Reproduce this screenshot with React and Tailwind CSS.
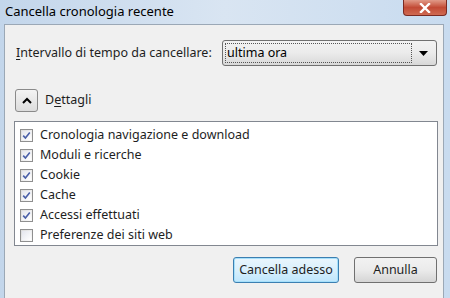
import React from "react";

const Check = ({ checked }) => (
  <div className="w-[13px] h-[13px] border border-[#8f8f8f] bg-gradient-to-br from-[#dcdcdc] to-[#fbfbfb] flex items-center justify-center">
    <div className="w-[9px] h-[9px] bg-gradient-to-br from-[#e4e6ee] to-[#ffffff] flex items-center justify-center">
      {checked && (
        <svg width="9" height="9" viewBox="0 0 9 9">
          <path d="M1.2 4.6 L3.4 7 L7.8 1.5" fill="none" stroke="#4a5fa8" strokeWidth="1.6" />
        </svg>
      )}
    </div>
  </div>
);

const items = [
  ["Cronologia navigazione e download", true],
  ["Moduli e ricerche", true],
  ["Cookie", true],
  ["Cache", true],
  ["Accessi effettuati", true],
  ["Preferenze dei siti web", false],
];

export default function App() {
  return (
    <div
      className="relative w-[450px] h-[298px] overflow-hidden bg-gradient-to-r from-[#c3d6eb] via-[#d9e5f2] to-[#c8dbef] text-[#1e1e1e]"
      style={{ fontFamily: '"Noto Sans", "Open Sans", sans-serif' }}
    >
      <div className="h-[24px] flex items-center pl-[5px] text-[13px] text-black">
        Cancella cronologia recente
      </div>
      <div className="absolute top-0 right-[3px] w-[44px] h-[16px] rounded-b-[4px] border border-t-0 border-[#7a2a22] bg-gradient-to-b from-[#e09a88] via-[#c24a35] to-[#cf6a52] flex items-center justify-center">
        <svg width="12" height="10" viewBox="0 0 12 10">
          <path d="M2 1 L10 9 M10 1 L2 9" stroke="white" strokeWidth="2.4" strokeLinecap="square" />
        </svg>
      </div>
      <div className="ml-[4px] mr-[6px] h-[274px] bg-[#f0f0f0] border-l border-t border-r border-[#9ba8b6] text-[12.5px] leading-none">
        <div className="flex items-center mt-[15px] pl-[11px]">
          <span className="w-[206px]">
            <span className="underline underline-offset-2">I</span>ntervallo di tempo da cancellare:
          </span>
          <div className="w-[215px] h-[26px] rounded-[3px] border border-[#707070] bg-gradient-to-b from-[#f2f2f2] via-[#ebebeb] to-[#d8d8d8] flex items-center px-[2px]">
            <div className="flex-1 h-[20px] border border-dotted border-[#555] flex items-center pl-[1px] text-black">
              ultima ora
            </div>
            <div className="w-[22px] flex justify-center">
              <svg width="9" height="5" viewBox="0 0 9 5">
                <path d="M0 0 H9 L4.5 5 Z" fill="#000" />
              </svg>
            </div>
          </div>
        </div>
        <div className="flex items-center mt-[23px] pl-[10px]">
          <div className="w-[23px] h-[23px] rounded-[3px] border border-[#8a8a8a] bg-gradient-to-b from-[#f4f4f4] to-[#dcdcdc] flex items-center justify-center">
            <svg width="10" height="7" viewBox="0 0 10 7">
              <path d="M1 6 L5 2 L9 6" fill="none" stroke="#000" strokeWidth="2" />
            </svg>
          </div>
          <span className="ml-[7px]">
            D<span className="underline underline-offset-2">e</span>ttagli
          </span>
        </div>
        <div className="ml-[9px] mt-[9px] w-[424px] h-[125px] bg-white border border-[#828790] pt-[3px]">
          {items.map(([label, checked]) => (
            <div key={label} className="h-[20px] flex items-center pl-[5px]">
              <Check checked={checked} />
              <span className="ml-[7px]">{label}</span>
            </div>
          ))}
        </div>
        <div className="flex justify-end gap-[15px] mt-[11px] pr-[6px]">
          <div className="w-[106px] h-[26px] rounded-[3px] border border-[#3c7fb1] bg-gradient-to-b from-[#eaf6fd] via-[#d9f0fc] to-[#bee6fd] flex items-center justify-center shadow-[inset_0_0_0_1px_#a6e0fb]">
            Cancella adesso
          </div>
          <div className="w-[83px] h-[26px] rounded-[3px] border border-[#707070] bg-gradient-to-b from-[#f2f2f2] via-[#ebebeb] to-[#d5d5d5] flex items-center justify-center">
            Annulla
          </div>
        </div>
      </div>
    </div>
  );
}
